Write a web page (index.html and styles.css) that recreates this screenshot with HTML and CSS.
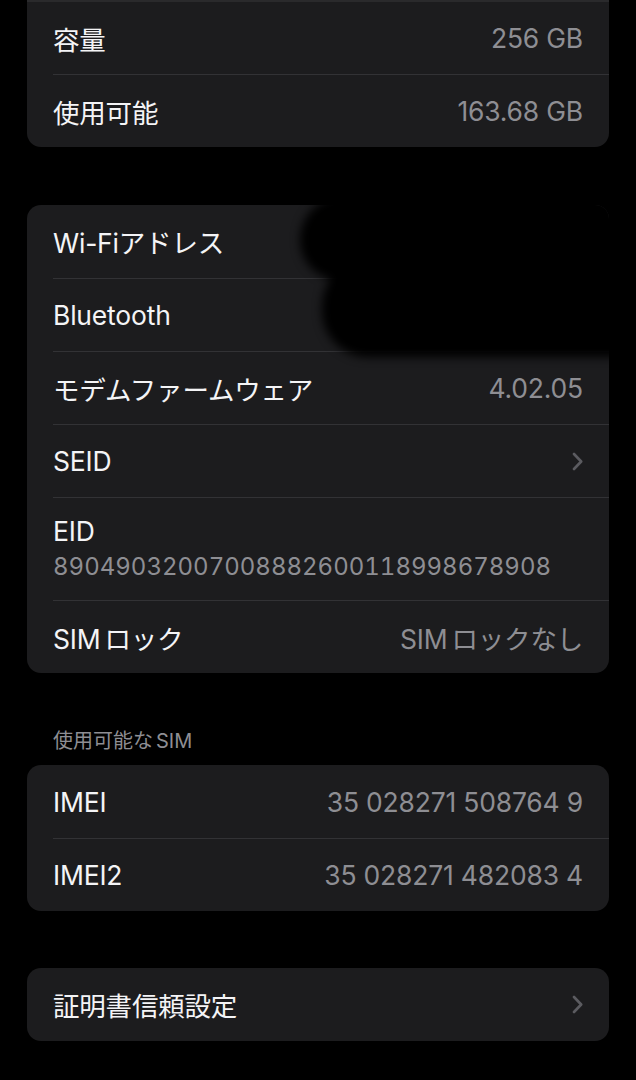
FILE: index.html
```html
<!DOCTYPE html>
<html lang="ja">
<head>
<meta charset="utf-8">
<title>情報</title>
<link rel="stylesheet" href="styles.css">
</head>
<body>
<main class="screen">
  <section class="group group-top">
    <div class="row"><span class="label">容量</span><span class="value">256 GB</span></div>
    <div class="row"><span class="label">使用可能</span><span class="value">163.68 GB</span></div>
  </section>

  <section class="group group-network">
    <div class="row"><span class="label">Wi-Fiアドレス</span><span class="value"></span></div>
    <div class="row"><span class="label">Bluetooth</span><span class="value"></span></div>
    <div class="row"><span class="label">モデムファームウェア</span><span class="value">4.02.05</span></div>
    <div class="row"><span class="label">SEID</span>
      <svg class="chevron" width="11" height="19" viewBox="0 0 11 19" aria-hidden="true"><polyline points="2,2 9.2,9.5 2,17" /></svg>
    </div>
    <div class="row row-stacked"><span class="label">EID</span><span class="value eid">89049032007008882600118998678908</span></div>
    <div class="row"><span class="label">SIM<span class="gap"></span>ロック</span><span class="value">SIM<span class="gap"></span>ロックなし</span></div>
    <div class="redaction" aria-hidden="true">
      <div class="blob blob-a"></div>
      <div class="blob blob-b"></div>
    </div>
  </section>

  <h2 class="group-header">使用可能な<span class="gap-sm"></span>SIM</h2>
  <section class="group group-sim">
    <div class="row"><span class="label">IMEI</span><span class="value">35 028271 508764 9</span></div>
    <div class="row"><span class="label">IMEI2</span><span class="value">35 028271 482083 4</span></div>
  </section>

  <section class="group group-last">
    <div class="row"><span class="label">証明書信頼設定</span>
      <svg class="chevron" width="11" height="19" viewBox="0 0 11 19" aria-hidden="true"><polyline points="2,2 9.2,9.5 2,17" /></svg>
    </div>
  </section>
</main>
</body>
</html>
```

FILE: styles.css
```css
html, body {
  margin: 0;
  padding: 0;
  background: #000;
}

body {
  font-family: "Inter", "Noto Sans CJK JP", sans-serif;
  color: #f2f2f4;
  width: 636px;
  height: 1080px;
  overflow: hidden;
}

.screen {
  padding: 0 27px;
}

.group {
  position: relative;
  background: #1c1c1e;
  border-radius: 14px;
  overflow: hidden;
  margin-top: 57px;
}

.group-top {
  margin-top: 0;
  border-top: 2px solid #2a2a2c;
  border-radius: 0 0 14px 14px;
}

.group-network {
  margin-top: 58px;
}

.group-sim {
  margin-top: 0;
}

.row {
  box-sizing: border-box;
  height: 73px;
  margin-left: 26px;
  padding-right: 26px;
  display: flex;
  align-items: center;
  justify-content: space-between;
}

.group-top .row:first-child {
  height: 72px;
}

.row + .row {
  border-top: 1px solid #323235;
}

.label {
  font-size: 26.5px;
  letter-spacing: -0.2px;
  color: #f4f4f6;
  white-space: nowrap;
}

.value {
  font-size: 26.5px;
  letter-spacing: -0.2px;
  color: #8e8e93;
  white-space: nowrap;
}

.gap {
  display: inline-block;
  width: 4px;
}

.gap-sm {
  display: inline-block;
  width: 3px;
}

.row-stacked {
  height: 103px;
  flex-direction: column;
  align-items: flex-start;
  justify-content: center;
  gap: 2px;
}

.row-stacked .label {
  line-height: 34px;
}

.eid {
  font-size: 24px;
  line-height: 34px;
  letter-spacing: 0;
  font-variant-numeric: tabular-nums;
}

.chevron {
  fill: none;
  stroke: #5b5b60;
  stroke-width: 2.6;
  stroke-linecap: round;
  stroke-linejoin: round;
}

.group-header {
  margin: 56px 0 12px 26px;
  font-size: 20px;
  line-height: 24px;
  font-weight: 400;
  color: #8e8e93;
}

.redaction {
  position: absolute;
  top: -10px;
  left: 273px;
  width: 340px;
  height: 180px;
  filter: blur(5px);
  pointer-events: none;
}

.blob {
  position: absolute;
  background: #000;
}

.blob-a {
  left: 0;
  top: 0;
  width: 340px;
  height: 85px;
  border-radius: 46px 0 0 40px;
}

.blob-b {
  left: 22px;
  top: 62px;
  width: 320px;
  height: 100px;
  border-radius: 50px 0 0 46px;
}
```
